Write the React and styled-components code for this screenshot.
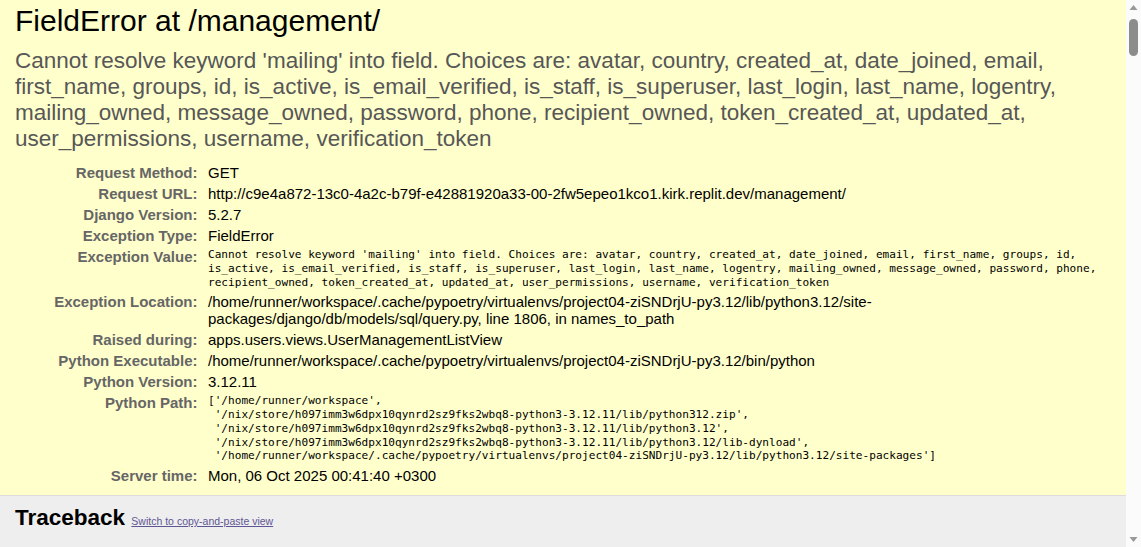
import React from "react";
import styled, { createGlobalStyle } from "styled-components";

const GlobalStyle = createGlobalStyle`
  body {
    margin: 0;
    background: #fff;
    color: #000;
    font-family: "Liberation Sans", Arial, sans-serif;
    font-size: 15px;
  }
`;

const Shell = styled.div`
  display: flex;
  align-items: flex-start;
`;

const Page = styled.div`
  flex: 1;
  min-width: 0;
`;

// browser scrollbar as seen in the screenshot
const Rail = styled.div`
  position: sticky;
  top: 0;
  flex: 0 0 15px;
  height: 100vh;
  background: #fbfbfb;
  display: flex;
  flex-direction: column;
  align-items: center;
`;

const Arrow = styled.svg`
  display: block;
  width: 15px;
  height: 17px;
  flex: none;
`;

const Thumb = styled.div`
  width: 9px;
  height: 37px;
  margin-top: 2px;
  margin-bottom: auto;
  border-radius: 5px;
  background: #8c8c8c;
`;

const Summary = styled.header`
  background: #ffc;
  padding: 4px 15px 9px;
  border-bottom: 1px solid #ddd;
`;

const Title = styled.h1`
  margin: 0;
  font-size: 30px;
  font-weight: normal;
`;

const ExceptionValue = styled.pre`
  margin: 10px 0;
  font-family: "Liberation Sans", Arial, sans-serif;
  font-size: 22.5px;
  color: #575757;
  white-space: pre;
`;

const Meta = styled.div`
  display: grid;
  grid-template-columns: 190px 1fr;
`;

const Label = styled.div`
  padding: 2px 7.5px 2px 3px;
  text-align: right;
  font-weight: bold;
  color: #666;
`;

const Value = styled.div`
  padding: 2px 3px;
  white-space: pre;
`;

const Mono = styled.pre`
  margin: 0;
  font-family: "DejaVu Sans Mono", "Liberation Mono", monospace;
  font-size: 11.1px;
  line-height: 13.75px;
  white-space: pre;
`;

const Traceback = styled.section`
  background: #eee;
  padding: 9px 15px;
  min-height: 80px;
`;

const SectionTitle = styled.h2`
  margin: 0;
  font-size: 22.5px;
  font-weight: bold;
`;

const Commands = styled.span`
  font-size: 10.5px;
  font-weight: normal;

  a {
    color: #5e5694;
  }
`;

const evText = [
  "Cannot resolve keyword 'mailing' into field. Choices are: avatar, country, created_at, date_joined, email,",
  "first_name, groups, id, is_active, is_email_verified, is_staff, is_superuser, last_login, last_name, logentry,",
  "mailing_owned, message_owned, password, phone, recipient_owned, token_created_at, updated_at,",
  "user_permissions, username, verification_token",
].join("\n");

const monoValue = [
  "Cannot resolve keyword 'mailing' into field. Choices are: avatar, country, created_at, date_joined, email, first_name, groups, id,",
  "is_active, is_email_verified, is_staff, is_superuser, last_login, last_name, logentry, mailing_owned, message_owned, password, phone,",
  "recipient_owned, token_created_at, updated_at, user_permissions, username, verification_token",
].join("\n");

const pythonPath = [
  "['/home/runner/workspace',",
  " '/nix/store/h097imm3w6dpx10qynrd2sz9fks2wbq8-python3-3.12.11/lib/python312.zip',",
  " '/nix/store/h097imm3w6dpx10qynrd2sz9fks2wbq8-python3-3.12.11/lib/python3.12',",
  " '/nix/store/h097imm3w6dpx10qynrd2sz9fks2wbq8-python3-3.12.11/lib/python3.12/lib-dynload',",
  " '/home/runner/workspace/.cache/pypoetry/virtualenvs/project04-ziSNDrjU-py3.12/lib/python3.12/site-packages']",
].join("\n");

const rows = [
  { label: "Request Method:", value: "GET" },
  {
    label: "Request URL:",
    value:
      "http://c9e4a872-13c0-4a2c-b79f-e42881920a33-00-2fw5epeo1kco1.kirk.replit.dev/management/",
  },
  { label: "Django Version:", value: "5.2.7" },
  { label: "Exception Type:", value: "FieldError" },
  { label: "Exception Value:", value: monoValue, mono: true },
  {
    label: "Exception Location:",
    value:
      "/home/runner/workspace/.cache/pypoetry/virtualenvs/project04-ziSNDrjU-py3.12/lib/python3.12/site-\npackages/django/db/models/sql/query.py, line 1806, in names_to_path",
  },
  { label: "Raised during:", value: "apps.users.views.UserManagementListView" },
  {
    label: "Python Executable:",
    value:
      "/home/runner/workspace/.cache/pypoetry/virtualenvs/project04-ziSNDrjU-py3.12/bin/python",
  },
  { label: "Python Version:", value: "3.12.11" },
  { label: "Python Path:", value: pythonPath, mono: true },
  { label: "Server time:", value: "Mon, 06 Oct 2025 00:41:40 +0300" },
];

const App = () => {
  return (
    <Shell>
      <GlobalStyle />
      <Page>
        <Summary>
          <Title>FieldError at /management/</Title>
          <ExceptionValue>{evText}</ExceptionValue>
          <Meta>
            {rows.map((row) => (
              <React.Fragment key={row.label}>
                <Label>{row.label}</Label>
                <Value>{row.mono ? <Mono>{row.value}</Mono> : row.value}</Value>
              </React.Fragment>
            ))}
          </Meta>
        </Summary>
        <Traceback>
          <SectionTitle>
            Traceback{" "}
            <Commands>
              <a href="#">Switch to copy-and-paste view</a>
            </Commands>
          </SectionTitle>
        </Traceback>
      </Page>
      <Rail>
        <Arrow viewBox="0 0 15 17">
          <path d="M3.5 10 L7.5 5 L11.5 10 Z" fill="#9a9a9a" />
        </Arrow>
        <Thumb />
        <Arrow viewBox="0 0 15 17">
          <path d="M3.5 7 L7.5 12 L11.5 7 Z" fill="#9a9a9a" />
        </Arrow>
      </Rail>
    </Shell>
  );
};

export default App;
